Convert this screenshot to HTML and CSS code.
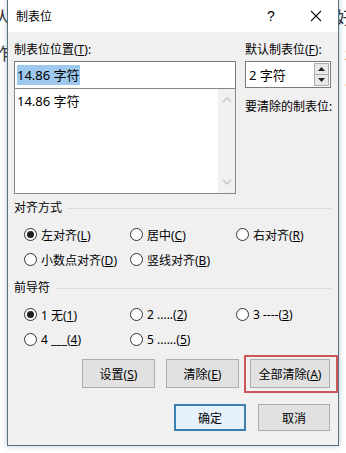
FILE: index.html
```html
<!DOCTYPE html>
<html lang="zh-CN">

<head>
	<meta charset="UTF-8" />
	<meta name="viewport" content="width=device-width, initial-scale=1.0" />
	<title>制表位</title>
	<link rel="stylesheet" href="styles.css">
</head>

<body>
	<!-- bits of the document that peek out beside the dialog -->
	<div class="doc">
		<div class="doc-col">
			<p>人</p>
			<p>作</p>
			<p></p>
			<p>)</p>
		</div>
		<div class="doc-col right">
			<p>好</p>
			<p>z</p>
			<p>?</p>
			<p></p>
		</div>
	</div>

	<div class="dialog">
		<div class="titlebar">
			<span class="title">制表位</span>
			<span class="help">?</span>
			<span class="close">
				<svg width="12" height="12" viewBox="0 0 12 12">
					<path d="M1 1 L11 11 M11 1 L1 11" stroke="#111" stroke-width="1.1" fill="none" />
				</svg>
			</span>
		</div>

		<div class="content">
			<div class="top">
				<div class="left-col">
					<div class="label">制表位位置(<u>T</u>):</div>
					<div class="textbox"><span class="selected">14.86 字符</span></div>
					<div class="listbox">
						<div class="list-item">14.86 字符</div>
						<div class="scrollbar">
							<svg width="10" height="6" viewBox="0 0 10 6">
								<path d="M1 5 L5 1 L9 5" stroke="#c4c4c4" stroke-width="1.3" fill="none" />
							</svg>
							<svg width="10" height="6" viewBox="0 0 10 6">
								<path d="M1 1 L5 5 L9 1" stroke="#c4c4c4" stroke-width="1.3" fill="none" />
							</svg>
						</div>
					</div>
				</div>
				<div class="right-col">
					<div class="label">默认制表位(<u>F</u>):</div>
					<div class="spinner">
						<span class="spin-value">2 字符</span>
						<div class="spin-buttons">
							<div class="spin-btn">
								<svg width="7" height="4" viewBox="0 0 7 4"><path d="M0 4 L3.5 0 L7 4 Z" fill="#222" /></svg>
							</div>
							<div class="spin-btn">
								<svg width="7" height="4" viewBox="0 0 7 4"><path d="M0 0 L3.5 4 L7 0 Z" fill="#222" /></svg>
							</div>
						</div>
					</div>
					<div class="label clear-label">要清除的制表位:</div>
				</div>
			</div>

			<div class="group-title">对齐方式</div>
			<div class="radio-grid">
				<div class="radio"><span class="dot checked"></span><span>左对齐(<u>L</u>)</span></div>
				<div class="radio"><span class="dot"></span><span>居中(<u>C</u>)</span></div>
				<div class="radio"><span class="dot"></span><span>右对齐(<u>R</u>)</span></div>
				<div class="radio"><span class="dot"></span><span>小数点对齐(<u>D</u>)</span></div>
				<div class="radio"><span class="dot"></span><span>竖线对齐(<u>B</u>)</span></div>
			</div>

			<div class="group-title second">前导符</div>
			<div class="radio-grid">
				<div class="radio"><span class="dot checked"></span><span>1 无(<u>1</u>)</span></div>
				<div class="radio"><span class="dot"></span><span>2 .....(<u>2</u>)</span></div>
				<div class="radio"><span class="dot"></span><span>3 ----(<u>3</u>)</span></div>
				<div class="radio"><span class="dot"></span><span>4 ___(<u>4</u>)</span></div>
				<div class="radio"><span class="dot"></span><span>5 ......(<u>5</u>)</span></div>
			</div>

			<div class="button-row">
				<button class="btn">设置(<u>S</u>)</button>
				<button class="btn">清除(<u>E</u>)</button>
				<button class="btn wide marked">全部清除(<u>A</u>)</button>
			</div>

			<div class="button-row footer">
				<button class="btn default">确定</button>
				<button class="btn">取消</button>
			</div>
		</div>
	</div>
</body>

</html>
```

FILE: styles.css
```css
* {
	box-sizing: border-box;
}

body {
	margin: 0;
	width: 346px;
	height: 453px;
	position: relative;
	overflow: hidden;
	background-color: #ffffff;
	font-family: "Noto Sans", "Noto Sans CJK SC", sans-serif;
	font-size: 12px;
	color: #000;
}

u {
	text-decoration: underline;
	text-underline-offset: 1px;
}

/* the document behind the dialog */
.doc {
	display: flex;
	justify-content: space-between;
	margin: 0 -7px 0 -6px;
	font-size: 17px;
	color: #333;
}

.doc-col p {
	margin: 0;
	height: 36px;
	line-height: 36px;
}

.doc-col.right {
	text-align: right;
}

.dialog {
	position: absolute;
	left: 7px;
	top: -1px;
	width: 332px;
	height: 447px;
	background-color: #f0f0f0;
	border: 1px solid #55707e;
	box-shadow: 0 0 6px rgba(60, 110, 130, 0.35);
	display: flex;
	flex-direction: column;
}

.titlebar {
	height: 32px;
	background-color: #ffffff;
	display: flex;
	align-items: center;
	padding: 0 0 0 8px;
	flex-shrink: 0;
}

.title {
	flex: 1;
}

.help {
	width: 20px;
	margin-right: 12px;
	font-family: "Liberation Sans", sans-serif;
	font-size: 14px;
	text-align: center;
}

.close {
	width: 46px;
	display: flex;
	justify-content: center;
	align-items: center;
	margin-right: -1px;
}

.content {
	padding: 10px 7px 0 6px;
	flex: 1;
}

.top {
	display: flex;
	gap: 9px;
}

.left-col {
	width: 222px;
}

.right-col {
	width: 86px;
}

.label {
	height: 16px;
	line-height: 16px;
	margin-bottom: 3px;
	white-space: nowrap;
}

.textbox {
	height: 28px;
	border: 1px solid #7a7a7a;
	background-color: #fff;
	padding: 4px 2px;
	line-height: 18px;
	font-size: 13px;
}

.selected {
	background-color: #9ec8ee;
	padding: 1px 0;
}

.listbox {
	height: 106px;
	margin-top: -1px;
	border: 1px solid #828790;
	background-color: #fff;
	display: flex;
}

.list-item {
	flex: 1;
	padding: 3px 2px;
	font-size: 13px;
	line-height: 18px;
}

.scrollbar {
	width: 17px;
	background-color: #f0f0f0;
	display: flex;
	flex-direction: column;
	justify-content: space-between;
	align-items: center;
	padding: 8px 0 8px;
}

.spinner {
	height: 27px;
	margin-top: 1px;
	border: 1px solid #7a7a7a;
	background-color: #fff;
	display: flex;
	align-items: center;
	padding-left: 3px;
	font-size: 13px;
}

.spin-value {
	flex: 1;
}

.spin-buttons {
	width: 15px;
	height: 23px;
	margin-right: 1px;
	display: flex;
	flex-direction: column;
}

.spin-btn {
	flex: 1;
	border: 1px solid #acacac;
	background-color: #e8e8e8;
	display: flex;
	justify-content: center;
	align-items: center;
}

.spin-btn + .spin-btn {
	border-top: none;
}

.clear-label {
	margin-top: 11px;
}

.group-title {
	display: flex;
	align-items: center;
	gap: 6px;
	height: 16px;
	line-height: 16px;
	margin-top: 6px;
}

.group-title::after {
	content: "";
	flex: 1;
	height: 1px;
	background-color: #dcdcdc;
}

.group-title.second {
	margin-top: 8px;
}

.radio-grid {
	display: grid;
	grid-template-columns: 106px 106px 1fr;
	grid-auto-rows: 25px;
	padding: 6px 0 0 10px;
}

.radio {
	display: flex;
	align-items: center;
	gap: 4px;
	white-space: nowrap;
}

.dot {
	width: 13px;
	height: 13px;
	border: 1px solid #333;
	border-radius: 50%;
	background-color: #fff;
	display: flex;
	justify-content: center;
	align-items: center;
	flex-shrink: 0;
}

.dot.checked::after {
	content: "";
	width: 7px;
	height: 7px;
	border-radius: 50%;
	background-color: #222;
}

.button-row {
	display: flex;
	justify-content: flex-end;
	gap: 11px;
	margin-top: 7px;
	padding-right: 1px;
}

.btn {
	width: 73px;
	height: 29px;
	border: 1px solid #adadad;
	background-color: #e1e1e1;
	font-family: inherit;
	font-size: 12px;
	color: #000;
	padding: 0;
	position: relative;
}

.btn.wide {
	width: 80px;
}

/* red marker drawn over the screenshot */
.btn.marked::after {
	content: "";
	position: absolute;
	left: -7px;
	top: -5px;
	right: -9px;
	bottom: -6px;
	border: 2px solid #cf5656;
}

.footer {
	margin-top: 16px;
	gap: 12px;
}

.footer .btn {
	width: 72px;
	height: 27px;
}

.btn.default {
	border: 2px solid #3c7fb1;
	background-color: #e5f1fb;
}
```
